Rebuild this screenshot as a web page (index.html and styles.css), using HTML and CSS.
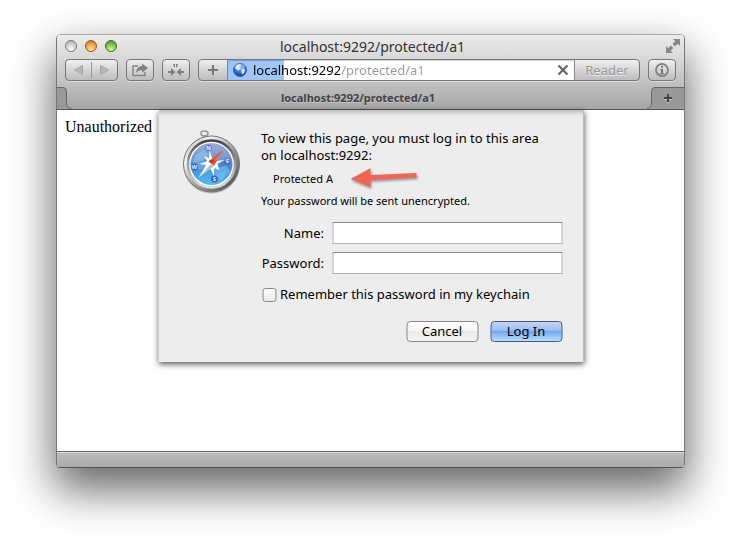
FILE: index.html
```html
<!DOCTYPE html>
<html lang="en">
<head>
<meta charset="utf-8">
<title>localhost:9292/protected/a1</title>
<link rel="stylesheet" href="styles.css">
</head>
<body>
<div class="window">
  <header class="chrome">
    <div class="titlebar">
      <div class="lights">
        <button class="light light-close" aria-label="Close"></button>
        <button class="light light-min" aria-label="Minimize"></button>
        <button class="light light-zoom" aria-label="Zoom"></button>
      </div>
      <h1 class="title">localhost:9292/protected/a1</h1>
      <button class="fullscreen" aria-label="Full screen">
        <svg width="14" height="14" viewBox="0 0 14 14" fill="#888"><path d="M7 0h7v7l-2.300-2.300-2.700 2.700-2.400-2.400 2.700-2.700zM0 7l2.300 2.300 2.700-2.700 2.400 2.400-2.700 2.700L7 14H0z"/></svg>
      </button>
    </div>
    <div class="toolbar">
      <div class="group">
        <button class="nav" aria-label="Back"><svg width="9" height="10" viewBox="0 0 9 10"><path d="M8.500.5v9L.5 5z" fill="#b8b8b8" stroke="#a4a4a4"/></svg></button>
        <button class="nav" aria-label="Forward"><svg width="9" height="10" viewBox="0 0 9 10"><path d="M.5.5v9l8-4.500z" fill="#b8b8b8" stroke="#a4a4a4"/></svg></button>
      </div>
      <button class="tool" aria-label="Share"><svg width="18" height="14" viewBox="0 0 18 14"><path d="M7 3H2v9.500h12V9" fill="none" stroke="#888" stroke-width="1.500"/><path d="M11 .5L17 5l-6 4.500V7Q7.500 6.800 5 10 5.500 3.300 11 3z" fill="#808080"/></svg></button>
      <button class="tool" aria-label="Reading list"><svg width="18" height="14" viewBox="0 0 18 14" fill="#808080"><path d="M6 1h2v3H7zM9 1h2l-1 3H9zM1 8h3V5l4.500 4L4 13v-3H1zM17 8h-3V5L9.500 9l4.500 4v-3h3z"/></svg></button>
      <div class="address">
        <button class="add" aria-label="Add bookmark"><svg width="12" height="12" viewBox="0 0 12 12"><path d="M6 1v10M1 6h10" stroke="#777" stroke-width="2"/></svg></button>
        <div class="field">
          <svg class="globe" width="16" height="16" viewBox="0 0 16 16">
            <defs><radialGradient id="earth" cx=".5" cy=".3" r=".7"><stop offset="0" stop-color="#7fb8ff"/><stop offset=".6" stop-color="#346fd2"/><stop offset="1" stop-color="#173f9d"/></radialGradient></defs>
            <circle cx="8" cy="8" r="6.500" fill="url(#earth)" stroke="#3a63b4"/>
            <path d="M3 5.500L5 3l3-1 1 1.500L7 5l1 2-2 1.500L4 7zM9.500 7.500l2.500-1 1 1.500-1 3-2 1.500-.5-3z" fill="#dbeeff"/>
            <ellipse cx="8" cy="4.500" rx="5" ry="3" fill="#fff" opacity=".25"/>
          </svg>
          <input class="url" type="text" value="localhost:9292/protected/a1" aria-label="Address">
          <button class="stop" aria-label="Stop"><svg width="12" height="12" viewBox="0 0 12 12"><path d="M1.500 1.500l9 9M10.500 1.500l-9 9" stroke="#666" stroke-width="2.200"/></svg></button>
        </div>
        <button class="reader">Reader</button>
      </div>
      <button class="tool" aria-label="Info"><svg width="14" height="14" viewBox="0 0 14 14"><circle cx="7" cy="7" r="6" fill="none" stroke="#808080" stroke-width="1.800"/><path d="M6 3h2v1.800H6zM5 6h3v4h1v1H5v-1h1V7H5z" fill="#777"/></svg></button>
    </div>
    <div class="tabs">
      <svg class="notch" width="16" height="22" viewBox="0 0 16 22"><path d="M0 .5h6q3.500 0 3.500 4V16q0 5.500 5 5.500H0z" fill="#999"/><path d="M0 .5h6q3.500 0 3.500 4V16q0 5.500 5 5.500" fill="none" stroke="#666"/></svg>
      <a class="tab" href="#page">localhost:9292/protected/a1</a>
      <button class="newtab" aria-label="New tab"><svg width="37" height="22" viewBox="0 0 37 22"><path d="M37 .5H8q-3.500 0-3.500 4V16q0 5.500-5 5.500H37z" fill="#999"/><path d="M37 .5H8q-3.500 0-3.500 4V16q0 5.500-5 5.500" fill="none" stroke="#666"/><path d="M21 8v8M17 12h8" stroke="#c5c5c5" stroke-width="2"/><path d="M21 7v8M17 11h8" stroke="#444" stroke-width="2"/></svg></button>
    </div>
  </header>
  <main class="page" id="page">
    <p class="body-text">Unauthorized</p>
    <form class="sheet" role="dialog" aria-label="Log in">
      <svg class="compass" width="60" height="66" viewBox="0 0 60 66">
        <defs>
          <linearGradient id="rim" x1="0" y1="0" x2="1" y2="1"><stop offset="0" stop-color="#999"/><stop offset=".25" stop-color="#f4f4f4"/><stop offset=".5" stop-color="#aaa"/><stop offset=".75" stop-color="#777"/><stop offset="1" stop-color="#333"/></linearGradient>
          <linearGradient id="bezel" x1="0" y1="0" x2="0" y2="1"><stop offset="0" stop-color="#444"/><stop offset=".45" stop-color="#999"/><stop offset="1" stop-color="#ddd"/></linearGradient>
          <linearGradient id="face" x1="0" y1="0" x2="0" y2="1"><stop offset="0" stop-color="#8f97cf"/><stop offset=".45" stop-color="#4482c9"/><stop offset="1" stop-color="#52bdf5"/></linearGradient>
        </defs>
        <ellipse cx="23" cy="3.500" rx="3.500" ry="2.500" fill="none" stroke="#999" stroke-width="1.500"/>
        <path d="M21 6h4v2h-4z" fill="#aaa"/>
        <ellipse cx="30" cy="36" rx="28" ry="27.500" fill="#000" opacity=".2"/>
        <circle cx="30" cy="34" r="28" fill="url(#rim)" stroke="#777"/>
        <circle cx="30" cy="34" r="23.500" fill="#fff" stroke="url(#bezel)" stroke-width="2.500"/>
        <circle cx="30" cy="34" r="21" fill="url(#face)"/>
        <path d="M14 25l8-5 5 5-5 6 3 6-7 3-7-5zM34 38l11-2 3 5-8 9-6-2z" fill="#8ed0fb" opacity=".4"/>
        <g fill="#3b63c4"><circle cx="27" cy="18" r="3.500"/><circle cx="13" cy="37" r="3.500"/><circle cx="46" cy="31" r="3.500"/><circle cx="33" cy="49" r="3.500"/></g>
        <g class="points"><text x="27" y="20">N</text><text x="13" y="39">W</text><text x="46" y="33">E</text><text x="33" y="51">S</text></g>
        <path d="M28 20l3 9 5-3-1 5 8-1-7 4 2 6-5-2-.5 8-4-8-6 3 2-6-7-1 8-3-3-5 5 2z" fill="#f4faff"/>
        <path d="M41.500 20L32.500 36 27 31.500z" fill="#ee5426"/><path d="M41.500 20L27 31.500l2.800 2.300z" fill="#c53518"/>
        <path d="M17 47.500l10-16 5.500 4.500z" fill="#fff"/><path d="M17 47.500l12.800-13.700 2.700 2.200z" fill="#b8bec7"/>
        <path d="M9 33a21 21 0 0 1 42 0Q30 27 9 33" fill="#fff" opacity=".18"/>
      </svg>
      <div class="content">
        <p class="lead">To view this page, you must log in to this area<br>on localhost:9292:</p>
        <p class="realm">Protected A
          <svg class="arrow" width="70" height="24" viewBox="0 0 70 24"><path d="M0 13L20 2v7l46-2v4.500L20 14v7z" fill="#f46455"/></svg>
        </p>
        <p class="note">Your password will be sent unencrypted.</p>
        <div class="fields">
          <label for="name">Name:</label><input id="name" type="text">
          <label for="password">Password:</label><input id="password" type="password">
        </div>
        <div class="remember"><input type="checkbox" id="remember"><label for="remember">Remember this password in my keychain</label></div>
        <div class="actions"><button class="push" type="button">Cancel</button><button class="push primary" type="submit">Log In</button></div>
      </div>
    </form>
  </main>
  <footer class="statusbar"></footer>
</div>
</body>
</html>
```
FILE: styles.css
```css
* { box-sizing: border-box; }

body {
  margin: 0;
  min-height: 100vh;
  padding: 34px 56px 78px;
  display: flex;
  flex-direction: column;
  background: #fff;
  color: #000;
  font: 13px/17px "Lucida Grande", "Noto Sans", sans-serif;
}

button, input { margin: 0; padding: 0; border: 0; font: inherit; }
button { background: none; display: flex; align-items: center; justify-content: center; }
svg { display: block; flex: none; }
p, h1 { margin: 0; }

.window {
  flex: 1;
  display: flex;
  flex-direction: column;
  border: 1px solid #777;
  border-top-color: #aaa;
  border-bottom-color: #555;
  border-radius: 5px 5px 4px 4px;
  overflow: hidden;
  box-shadow: 0 20px 44px 2px rgba(0, 0, 0, .6);
}

.chrome {
  background: linear-gradient(#ececec, #cfcfcf 45%, #a6a6a6);
  border-bottom: 1px solid #555;
}

.titlebar {
  display: grid;
  grid-template-columns: 60px 1fr 60px;
  align-items: center;
  height: 24px;
  padding: 0 4px 2px 8px;
}
.lights { display: flex; gap: 8px; }
.light { width: 12px; height: 12px; border: 1px solid #777; border-radius: 50%; }
.light-close { background: radial-gradient(circle at 50% 90%, #fff, #ccc 60%, #aaa); }
.light-min { background: radial-gradient(circle at 50% 90%, #ffe98a, #eea33e 60%, #b86b1a); border-color: #945a22; }
.light-zoom { background: radial-gradient(circle at 50% 90%, #d8ff9c, #76bd4c 60%, #3e8428); border-color: #3f7430; }
.title { text-align: center; font-size: 14px; font-weight: 400; color: #333; }
.fullscreen { justify-self: end; }

.toolbar { display: flex; gap: 8px; padding: 0 8px 6px; }
.group, .tool, .address {
  height: 22px;
  border: 1px solid #777;
  border-radius: 4px;
  background: linear-gradient(#efefef, #bdbdbd);
  box-shadow: 0 1px 0 rgba(255, 255, 255, .4);
}
.group { display: flex; align-items: center; width: 53px; }
.nav { flex: 1; height: 16px; }
.nav + .nav { border-left: 1px solid #999; }
.tool { width: 28px; }
.address { flex: 1; display: flex; overflow: hidden; }
.add { width: 28px; }
.field {
  flex: 1;
  display: flex;
  align-items: center;
  padding: 0 5px 0 4px;
  border: 0 solid #888;
  border-width: 0 1px;
  background: linear-gradient(90deg, #9dc7fa 56px, #fff 56px);
  box-shadow: inset 0 1px 1px rgba(0, 0, 0, .2);
}
.url {
  flex: 1;
  min-width: 0;
  height: 20px;
  margin-left: 5px;
  background: linear-gradient(90deg, #000 87px, #999 87px);
  -webkit-background-clip: text;
  background-clip: text;
  color: transparent;
}
.reader { width: 64px; color: #999; text-shadow: 0 1px 0 #eee; }

.tabs { display: flex; height: 22px; }
.tab {
  flex: 1;
  padding-right: 4px;
  color: #444;
  text-align: center;
  font-size: 11px;
  line-height: 22px;
  font-weight: 700;
  text-decoration: none;
  text-shadow: 0 1px 0 #c5c5c5;
}

.page { flex: 1; position: relative; background: #fff; padding: 8px; }
.body-text { font: 16px/18px "Liberation Serif", serif; }

.sheet {
  position: absolute;
  top: 0;
  left: 50%;
  transform: translateX(-50%);
  width: 425px;
  padding: 20px 21px 20px 23px;
  display: flex;
  gap: 20px;
  background: #ededed;
  box-shadow: 0 2px 6px rgba(0, 0, 0, .7), inset 0 5px 5px -3px rgba(0, 0, 0, .25);
}
.points { fill: #dcecff; font-size: 6px; font-weight: 700; text-anchor: middle; }
.content { flex: 1; }
.realm { position: relative; margin-top: 6px; padding-left: 12px; font-size: 11px; }
.arrow { position: absolute; left: 89px; top: -4px; filter: drop-shadow(1px 2px 1px rgba(0, 0, 0, .35)); }
.note { margin-top: 5px; font-size: 11px; }
.fields {
  display: grid;
  grid-template-columns: 1fr 230px;
  gap: 8px;
  align-items: center;
  margin-top: 13px;
  text-align: right;
}
.fields input { width: 100%; height: 22px; padding: 0 4px; background: #fff; border: 1px solid #b0b0b0; border-top-color: #888; }
.remember { display: flex; align-items: center; gap: 4px; margin-top: 12px; }
.remember input {
  appearance: none;
  width: 14px;
  height: 14px;
  margin-left: 1px;
  border: 1px solid #888;
  border-radius: 3px;
  background: linear-gradient(#fff, #e8e8e8);
}
.actions { display: flex; justify-content: flex-end; gap: 12px; margin-top: 18px; }
.push {
  width: 72px;
  height: 21px;
  border: 1px solid #888;
  border-radius: 4px;
  background: linear-gradient(#fff, #f6f6f6 50%, #e9e9e9 50%, #f6f6f6);
}
.primary {
  border-color: #4f4f94;
  background: linear-gradient(#c5d7f3, #93b9ef 50%, #72a7ee 50%, #b8e0fb);
}

.statusbar {
  height: 16px;
  border-top: 1px solid #666;
  background: linear-gradient(#bdbdbd, #aaa);
  box-shadow: inset 0 1px 0 #ddd;
}
```
